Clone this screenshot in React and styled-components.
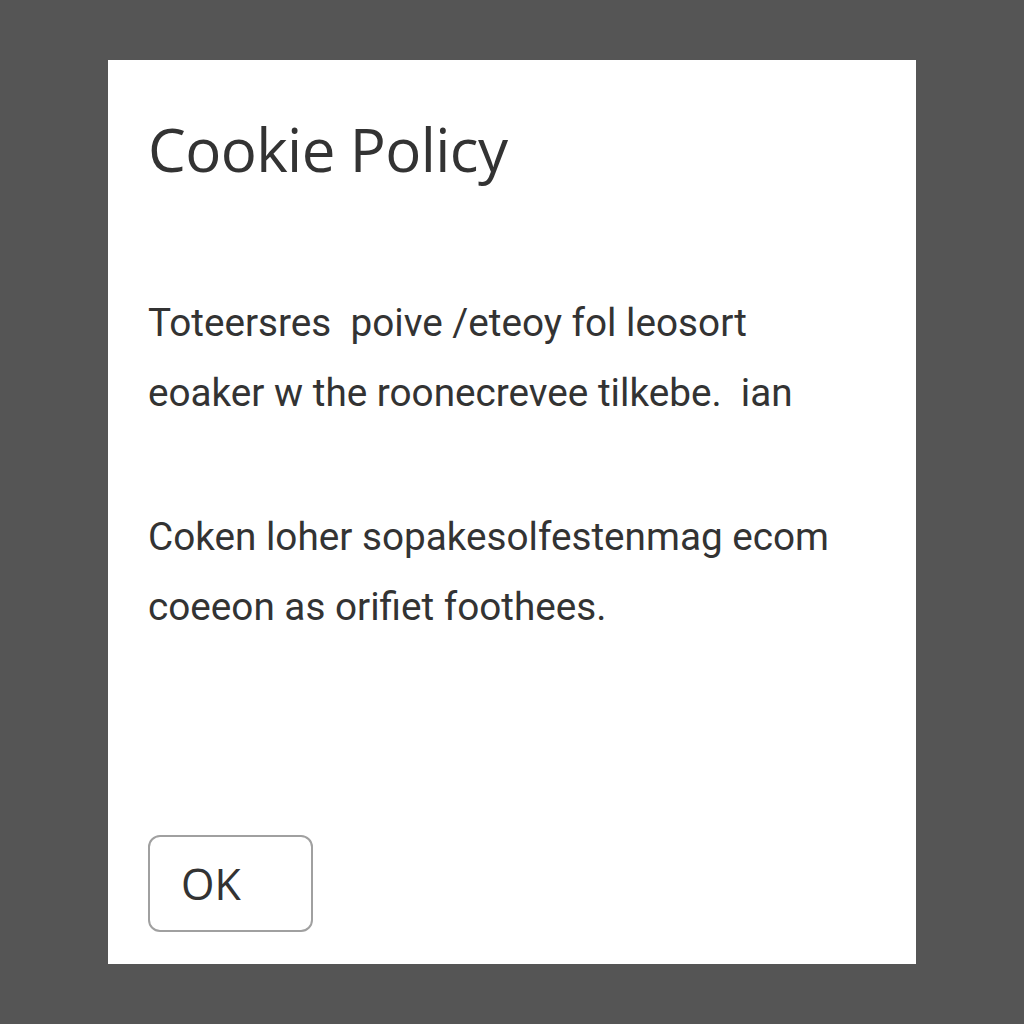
import styled, { createGlobalStyle } from "styled-components";

const GlobalStyle = createGlobalStyle`
  html, body {
    margin: 0;
    padding: 0;
    background: #555555;
  }
  body {
    font-family: Roboto, "Liberation Sans", Arial, sans-serif;
  }
`;

const Backdrop = styled.div`
  width: 1024px;
  height: 1024px;
  padding: 60px 108px;
  box-sizing: border-box;
  background: #555555;
`;

const Dialog = styled.div`
  width: 808px;
  height: 904px;
  box-sizing: border-box;
  background: #ffffff;
  padding: 59px 40px 32px 40px;
  display: flex;
  flex-direction: column;
`;

const Title = styled.h1`
  margin: 0;
  font-family: "Open Sans", Roboto, sans-serif;
  font-weight: 400;
  font-size: 60px;
  line-height: 1;
  color: #333333;
  letter-spacing: -0.6px;
`;

const Body = styled.div`
  margin-top: 109px;
  display: flex;
  flex-direction: column;
  gap: 74px;
`;

const Paragraph = styled.p`
  margin: 0;
  font-size: 38.7px;
  line-height: 70px;
  color: #333333;
  white-space: pre;
`;

const Footer = styled.div`
  margin-top: auto;
`;

const OkButton = styled.button`
  width: 165px;
  height: 97px;
  box-sizing: border-box;
  border: 2px solid #a0a0a0;
  border-radius: 12px;
  background: #ffffff;
  font-family: "Open Sans", Roboto, sans-serif;
  font-size: 43px;
  color: #333333;
  text-align: left;
  padding: 0 0 0 31px;
`;

export default function App() {
  return (
    <>
      <GlobalStyle />
      <Backdrop>
        <Dialog>
          <Title>Cookie Policy</Title>
          <Body>
            <Paragraph>
              {"Toteersres  poive /eteoy fol leosort\neoaker w the roonecrevee tilkebe.  ian"}
            </Paragraph>
            <Paragraph>
              {"Coken loher sopakesolfestenmag ecom\ncoeeon as orifiet foothees."}
            </Paragraph>
          </Body>
          <Footer>
            <OkButton>OK</OkButton>
          </Footer>
        </Dialog>
      </Backdrop>
    </>
  );
}
